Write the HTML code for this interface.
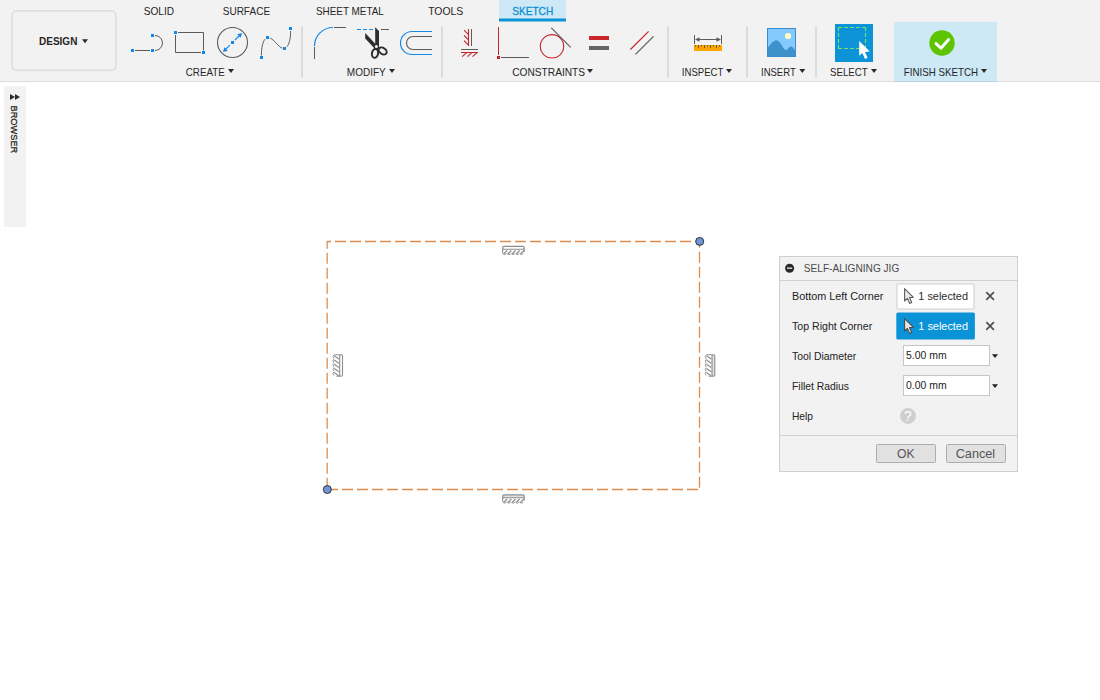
<!DOCTYPE html>
<html>
<head>
<meta charset="utf-8">
<title>Sketch - Self-Aligning Jig</title>
<style>
html,body{margin:0;padding:0;}
body{width:1100px;height:700px;overflow:hidden;background:#fff;position:relative;}
svg{position:absolute;left:0;top:0;font-family:"Liberation Sans",sans-serif;}
</style>
</head>
<body>
<svg width="1100" height="700" viewBox="0 0 1100 700">
<rect x="0" y="0" width="1100" height="82" fill="#f2f2f2"/>
<g id="toolbar">
<rect x="12.1" y="10.9" width="103.8" height="59.4" rx="4.5" fill="#f2f2f2" stroke="#dddddd" stroke-width="1.6"/>
<text x="39" y="45" font-size="11" fill="#262626" font-weight="bold" textLength="38.4" lengthAdjust="spacingAndGlyphs" >DESIGN</text>
<path d="M82 39.3h6l-3.0 4z" fill="#2a2a2a"/>
<rect x="499" y="0" width="67" height="19" fill="#cde9f6"/><rect x="499" y="18.5" width="67" height="3" fill="#0b93d5"/>
<text x="143.7" y="15" font-size="11" fill="#262626" textLength="30.4" lengthAdjust="spacingAndGlyphs" >SOLID</text>
<text x="222.7" y="15" font-size="11" fill="#262626" textLength="47.4" lengthAdjust="spacingAndGlyphs" >SURFACE</text>
<text x="316" y="15" font-size="11" fill="#262626" textLength="67.8" lengthAdjust="spacingAndGlyphs" >SHEET METAL</text>
<text x="428.2" y="15" font-size="11" fill="#262626" textLength="35.1" lengthAdjust="spacingAndGlyphs" >TOOLS</text>
<text x="512.2" y="15" font-size="11" fill="#0b8fd3" textLength="41" lengthAdjust="spacingAndGlyphs" stroke="#0b8fd3" stroke-width="0.3">SKETCH</text>
<rect x="894" y="22" width="103" height="60" fill="#cde9f6"/>
<text x="185.8" y="76" font-size="11" fill="#262626" textLength="38.9" lengthAdjust="spacingAndGlyphs" >CREATE</text>
<path d="M228 69h6l-3.0 4z" fill="#2a2a2a"/>
<text x="346.8" y="76" font-size="11" fill="#262626" textLength="38.9" lengthAdjust="spacingAndGlyphs" >MODIFY</text>
<path d="M389 69h6l-3.0 4z" fill="#2a2a2a"/>
<text x="512.2" y="76" font-size="11" fill="#262626" textLength="72.9" lengthAdjust="spacingAndGlyphs" >CONSTRAINTS</text>
<path d="M587 69h6l-3.0 4z" fill="#2a2a2a"/>
<text x="681.8" y="76" font-size="11" fill="#262626" textLength="41.6" lengthAdjust="spacingAndGlyphs" >INSPECT</text>
<path d="M726 69h6l-3.0 4z" fill="#2a2a2a"/>
<text x="761" y="76" font-size="11" fill="#262626" textLength="34.7" lengthAdjust="spacingAndGlyphs" >INSERT</text>
<path d="M799.3 69h6l-3.0 4z" fill="#2a2a2a"/>
<text x="830" y="76" font-size="11" fill="#262626" textLength="37.7" lengthAdjust="spacingAndGlyphs" >SELECT</text>
<path d="M871 69h6l-3.0 4z" fill="#2a2a2a"/>
<text x="903.8" y="76" font-size="11" fill="#262626" textLength="74.2" lengthAdjust="spacingAndGlyphs" >FINISH SKETCH</text>
<path d="M981 69h6l-3.0 4z" fill="#2a2a2a"/>
<rect x="301" y="26.5" width="2" height="51" fill="#dcdcdc"/>
<rect x="441" y="26.5" width="2" height="51" fill="#dcdcdc"/>
<rect x="667" y="26.5" width="2" height="51" fill="#dcdcdc"/>
<rect x="746" y="26.5" width="2" height="51" fill="#dcdcdc"/>
<rect x="815" y="26.5" width="2" height="51" fill="#dcdcdc"/>
<rect x="0" y="81" width="1100" height="1" fill="#000" fill-opacity="0.088"/>
</g>
<g id="icons">
<rect x="131" y="49" width="3" height="3" fill="#1588e6"/>
<rect x="151" y="49" width="3" height="3" fill="#1588e6"/>
<rect x="151" y="34" width="3" height="3" fill="#1588e6"/>
<path d="M135 50.5H150" stroke="#5c5c5c" fill="none"/>
<path d="M155 35.5A7.5 7.5 0 0 1 155 50.5" stroke="#5c5c5c" fill="none"/>
<path d="M178 32.5H203.5V50.5M175.5 35V52.5H201" stroke="#5c5c5c" fill="none"/>
<rect x="174" y="31" width="3" height="3" fill="#1588e6"/>
<rect x="202" y="51" width="3" height="3" fill="#1588e6"/>
<circle cx="232.5" cy="42.5" r="15" stroke="#5c5c5c" stroke-width="1.1" fill="none"/>
<rect x="231" y="41" width="3" height="3" fill="#1588e6"/>
<path d="M235 40L239.5 35.5M229.8 45.2L225.5 49.5" stroke="#1588e6" stroke-width="1.1" fill="none"/>
<path d="M242 33L237.2 34.3L240.7 37.8zM223 52L227.8 50.7L224.3 47.2z" fill="#1588e6"/>
<path d="M261.4 55.5C261.4 48 262.5 42.5 265 39.2M270.2 38.2C274 39.5 278.5 47 282.3 48.2M286.8 46.8C289.5 44 290.6 38 290.6 31" stroke="#5c5c5c" fill="none"/>
<rect x="260" y="56" width="3" height="3" fill="#1588e6"/>
<rect x="266" y="36" width="3" height="3" fill="#1588e6"/>
<rect x="283" y="47" width="3" height="3" fill="#1588e6"/>
<rect x="289" y="27" width="3" height="3" fill="#1588e6"/>
<path d="M314.5 47V59M334 27.5H346" stroke="#5c5c5c" fill="none"/>
<path d="M314.5 46A18.5 18.5 0 0 1 333 27.5" stroke="#1588e6" stroke-width="1.2" fill="none"/>
<path d="M357 29.5H374" stroke="#1588e6" stroke-dasharray="4 2" fill="none"/>
<path d="M381 29.5H389" stroke="#5c5c5c" fill="none"/>
<path d="M375.2 27.2L379 31V48L376.8 50.3L374.3 48.3L375.2 44z" fill="#2d2d2d"/>
<path d="M365.2 33L375.5 44L378.5 47L376 50L365.2 38.4z" fill="#2d2d2d"/>
<ellipse cx="375" cy="53.4" rx="3.05" ry="4.5" transform="rotate(10 375 53.4)" stroke="#2d2d2d" stroke-width="2" fill="none"/>
<ellipse cx="382.7" cy="51" rx="4.4" ry="3" transform="rotate(35 382.7 51)" stroke="#2d2d2d" stroke-width="2" fill="none"/>
<circle cx="376.4" cy="46.4" r="1.5" fill="#f2f2f2"/>
<path d="M432 31.5H412A11.5 11.5 0 0 0 412 54.5H432" stroke="#1588e6" stroke-width="1.2" fill="none"/>
<path d="M432 36.5H413A6.5 6.5 0 0 0 413 49.5H432" stroke="#5c5c5c" stroke-width="1.1" fill="none"/>
<path d="M471.5 29V46M461 49.5H478" stroke="#5c5c5c" fill="none"/>
<path d="M468.5 29V46M464 30.2L468.5 34.7M464 35.3L468.5 39.8M464 40.6L468.5 45.1M461 52.5H478M466.7 52.7L462.2 56.7M471.9 52.7L467.4 56.7M477 52.7L472.5 56.7" stroke="#c9252b" stroke-width="1.1" fill="none"/>
<path d="M498.5 27V55" stroke="#c9252b" fill="none"/>
<rect x="497" y="56" width="3" height="3" fill="#c9252b"/>
<path d="M501 57.5H529" stroke="#5c5c5c" fill="none"/>
<circle cx="552" cy="46.3" r="11.7" stroke="#c9252b" stroke-width="1.1" fill="none"/>
<path d="M551.3 27.9L570.7 47.4" stroke="#5c5c5c" stroke-width="1.1" fill="none"/>
<rect x="589" y="36" width="20" height="4" fill="#c9252b"/>
<rect x="589" y="46" width="20" height="4" fill="#666"/>
<path d="M630.4 49.5L648.6 31.3" stroke="#c9252b" stroke-width="1.2" fill="none"/>
<path d="M635.5 54.4L653.5 36.4" stroke="#5c5c5c" stroke-width="1.2" fill="none"/>
<rect x="694" y="45" width="28" height="6" fill="#fba500"/>
<path d="M695.5 45V46.5M698.5 45V48M701.5 45V46.5M704.5 45V48M707.5 45V46.5M710.5 45V48M713.5 45V46.5M716.5 45V48M719.5 45V46.5" stroke="#6b5a2a" fill="none"/>
<path d="M694.5 35V44M721.5 35V44M697 39.5H719" stroke="#5c5c5c" fill="none"/>
<path d="M695 39.5L699.5 37.3V41.7zM721 39.5L716.5 37.3V41.7z" fill="#5c5c5c"/>
<rect x="767.5" y="28.5" width="28" height="28" fill="#84cafe" stroke="#3a8ccf"/>
<path d="M768 47.5C770.5 44 773.5 40.2 776.2 40.2C780.6 40.2 783 49.9 786 49.9C787.8 49.9 788.8 46.4 791 46.4C792.9 46.4 794 49 795 50.5V56H768z" fill="#3d92cb"/>
<circle cx="788" cy="36" r="3.1" fill="#fdfcc4"/>
<rect x="835" y="24" width="38" height="38" fill="#0d94d8"/>
<path d="M838 27.5H866M838 48.5H866M838.5 27V49M865.5 27V49" stroke="#78e072" stroke-width="1.1" stroke-dasharray="4 2" fill="none"/>
<path d="M859.2 41V55.8L862.3 53L865 59L867.6 57.8L865 52L869.8 51.6z" fill="#fff"/>
<circle cx="942" cy="43" r="12.7" fill="#5dc400"/>
<path d="M936 43.6L941 48.2L948.6 39.6" stroke="#fff" stroke-width="3" fill="none" stroke-linecap="round" stroke-linejoin="round"/>
</g>
<g id="browser">
<rect x="4" y="86" width="22" height="141" fill="#f2f2f2"/>
<path d="M10 94L15 97L10 100zM15 94L20 97L15 100z" fill="#2b2b2b"/>
<text x="0" y="0" font-size="9.8" fill="#222" textLength="47.8" lengthAdjust="spacingAndGlyphs" stroke="#222" stroke-width="0.25" transform="translate(10.9 105.5) rotate(90)">BROWSER</text>
</g>
<g id="sketch">
<path d="M327 241.5H699.5" stroke="#de8d4c" stroke-width="1.3" stroke-dasharray="11 4" stroke-dashoffset="7" fill="none"/>
<path d="M327 489.5H699.5" stroke="#de8d4c" stroke-width="1.3" stroke-dasharray="11 4" stroke-dashoffset="0" fill="none"/>
<path d="M327.15 241V489.5" stroke="#de8d4c" stroke-width="1.3" stroke-dasharray="11 4" stroke-dashoffset="3.3" fill="none"/>
<path d="M699.5 241V489.5" stroke="#de8d4c" stroke-width="1.3" stroke-dasharray="11 4" stroke-dashoffset="4.2" fill="none"/>
<circle cx="699.7" cy="241.4" r="4" fill="#7096d8" stroke="#222" stroke-width="0.9"/>
<circle cx="327.3" cy="489.5" r="4" fill="#7096d8" stroke="#222" stroke-width="0.9"/>
<g transform="translate(502 245.1)" stroke="#8e8e8e" stroke-width="1.1" fill="none"><rect x="0.7" y="1.3" width="21.5" height="2.8" rx="1.2" fill="#fff"/><path d="M0.7 3.5V8.2M22.2 3.5V6.8"/><path d="M1.6 8.9L5.1 5.4M5.800000000000001 8.9L9.3 5.4M10.0 8.9L13.5 5.4M14.200000000000001 8.9L17.700000000000003 5.4M18.400000000000002 8.9L21.9 5.4" stroke-width="1.2"/><path d="M0.9 8.6Q2.6 10.6 4.6 8.6M5.1000000000000005 8.6Q6.800000000000001 10.6 8.8 8.6M9.3 8.6Q11.0 10.6 13.0 8.6M13.500000000000002 8.6Q15.200000000000001 10.6 17.200000000000003 8.6M17.7 8.6Q19.400000000000002 10.6 21.4 8.6" stroke-width="0.9"/></g>
<g transform="translate(502 493.6)" stroke="#8e8e8e" stroke-width="1.1" fill="none"><rect x="0.7" y="1.3" width="21.5" height="2.8" rx="1.2" fill="#e0e0e0"/><path d="M0.7 3.5V8.2M22.2 3.5V6.8"/><path d="M1.6 8.9L5.1 5.4M5.800000000000001 8.9L9.3 5.4M10.0 8.9L13.5 5.4M14.200000000000001 8.9L17.700000000000003 5.4M18.400000000000002 8.9L21.9 5.4" stroke-width="1.2"/><path d="M0.9 8.6Q2.6 10.6 4.6 8.6M5.1000000000000005 8.6Q6.800000000000001 10.6 8.8 8.6M9.3 8.6Q11.0 10.6 13.0 8.6M13.500000000000002 8.6Q15.200000000000001 10.6 17.200000000000003 8.6M17.7 8.6Q19.400000000000002 10.6 21.4 8.6" stroke-width="0.9"/></g>
<g transform="translate(332.7 354)" stroke="#8e8e8e" stroke-width="1.1" fill="none"><rect x="7" y="0.7" width="2.8" height="21.5" rx="1.2" fill="#fff"/><path d="M7.5 0.7H1.6M7.5 22.2H3.8"/><path d="M1.5 1.8L6.2 5.1M1.5 6.0L6.2 9.3M1.5 10.200000000000001L6.2 13.5M1.5 14.400000000000002L6.2 17.700000000000003M1.5 18.6L6.2 21.9" stroke-width="1.2"/><path d="M1.2 0.9Q-0.8 2.6 1.2 4.6M1.2 5.1000000000000005Q-0.8 6.800000000000001 1.2 8.8M1.2 9.3Q-0.8 11.0 1.2 13.0M1.2 13.500000000000002Q-0.8 15.200000000000001 1.2 17.200000000000003M1.2 17.7Q-0.8 19.400000000000002 1.2 21.4" stroke-width="0.9"/></g>
<g transform="translate(705 354)" stroke="#8e8e8e" stroke-width="1.1" fill="none"><rect x="7" y="0.7" width="2.8" height="21.5" rx="1.2" fill="#e0e0e0"/><path d="M7.5 0.7H1.6M7.5 22.2H3.8"/><path d="M1.5 1.8L6.2 5.1M1.5 6.0L6.2 9.3M1.5 10.200000000000001L6.2 13.5M1.5 14.400000000000002L6.2 17.700000000000003M1.5 18.6L6.2 21.9" stroke-width="1.2"/><path d="M1.2 0.9Q-0.8 2.6 1.2 4.6M1.2 5.1000000000000005Q-0.8 6.800000000000001 1.2 8.8M1.2 9.3Q-0.8 11.0 1.2 13.0M1.2 13.500000000000002Q-0.8 15.200000000000001 1.2 17.200000000000003M1.2 17.7Q-0.8 19.400000000000002 1.2 21.4" stroke-width="0.9"/></g>
</g>
<g id="dialog">
<rect x="779.5" y="256.5" width="238" height="215" fill="#f2f2f2" stroke="#cfcfcf"/>
<path d="M780 280.5H1017M780 435.5H1017" stroke="#d0d0d0" fill="none"/>
<circle cx="789.6" cy="268.2" r="4.5" fill="#2a2a2a"/><rect x="787" y="267.5" width="5.2" height="1.3" fill="#ececec"/>
<text x="803.8" y="272" font-size="11" fill="#4a4a4a" textLength="95.5" lengthAdjust="spacingAndGlyphs" >SELF-ALIGNING JIG</text>
<text x="792" y="300" font-size="11" fill="#222" textLength="91.3" lengthAdjust="spacingAndGlyphs" >Bottom Left Corner</text>
<text x="792" y="330" font-size="11" fill="#222" textLength="80.2" lengthAdjust="spacingAndGlyphs" >Top Right Corner</text>
<text x="792" y="360" font-size="11" fill="#222" textLength="64.2" lengthAdjust="spacingAndGlyphs" >Tool Diameter</text>
<text x="792" y="390" font-size="11" fill="#222" textLength="57" lengthAdjust="spacingAndGlyphs" >Fillet Radius</text>
<text x="792" y="420" font-size="11" fill="#222" textLength="21" lengthAdjust="spacingAndGlyphs" >Help</text>
<rect x="896.9" y="283.9" width="77.2" height="25.2" rx="1.5" fill="#fff" stroke="#dfdfdf" stroke-width="1.8"/>
<rect x="896.3" y="312.4" width="78.6" height="27" rx="1.5" fill="#0a93d7"/>
<path transform="translate(904 288)" d="M0.6 0.6V13L3.4 10.4L5.6 15.4L7.7 14.5L5.5 9.6L9.4 9.3z" fill="#e9ecef" stroke="#5a5a5a" stroke-width="1.1" stroke-linejoin="round"/>
<path transform="translate(904 318)" d="M0.6 0.6V13L3.4 10.4L5.6 15.4L7.7 14.5L5.5 9.6L9.4 9.3z" fill="#e4e8ec" stroke="#4a4a4a" stroke-width="1.1" stroke-linejoin="round"/>
<text x="918.3" y="300" font-size="11" fill="#2c2c2c" textLength="49.7" lengthAdjust="spacingAndGlyphs" >1 selected</text>
<text x="918.3" y="330" font-size="11" fill="#fff" textLength="49.7" lengthAdjust="spacingAndGlyphs" >1 selected</text>
<path d="M986.3 292.2l7.6 7.6m0 -7.6l-7.6 7.6" stroke="#505050" stroke-width="1.7" fill="none"/>
<path d="M986.3 322.2l7.6 7.6m0 -7.6l-7.6 7.6" stroke="#505050" stroke-width="1.7" fill="none"/>
<rect x="903.5" y="345.5" width="86" height="20" fill="#fff" stroke="#c6c6c6"/>
<text x="906" y="358.7" font-size="11" fill="#222" textLength="40.6" lengthAdjust="spacingAndGlyphs" >5.00 mm</text>
<path d="M992 354.2h6l-3.0 3.9z" fill="#222"/>
<rect x="903.5" y="375.5" width="86" height="20" fill="#fff" stroke="#c6c6c6"/>
<text x="906" y="388.7" font-size="11" fill="#222" textLength="40.6" lengthAdjust="spacingAndGlyphs" >0.00 mm</text>
<path d="M992 384.2h6l-3.0 3.9z" fill="#222"/>
<circle cx="908" cy="416" r="7.9" fill="#d0cfcd"/>
<text x="904" y="421.1" font-size="14" fill="#fff" >?</text>
<rect x="876.5" y="444.5" width="59" height="18" rx="1" fill="#e1e1e1" stroke="#adadad"/>
<text x="897" y="458.3" font-size="13" fill="#555" textLength="17.6" lengthAdjust="spacingAndGlyphs" >OK</text>
<rect x="946.5" y="444.5" width="59" height="18" rx="1" fill="#e1e1e1" stroke="#adadad"/>
<text x="955.7" y="458.3" font-size="13" fill="#555" textLength="39.5" lengthAdjust="spacingAndGlyphs" >Cancel</text>
</g>
</svg>
</body>
</html>
